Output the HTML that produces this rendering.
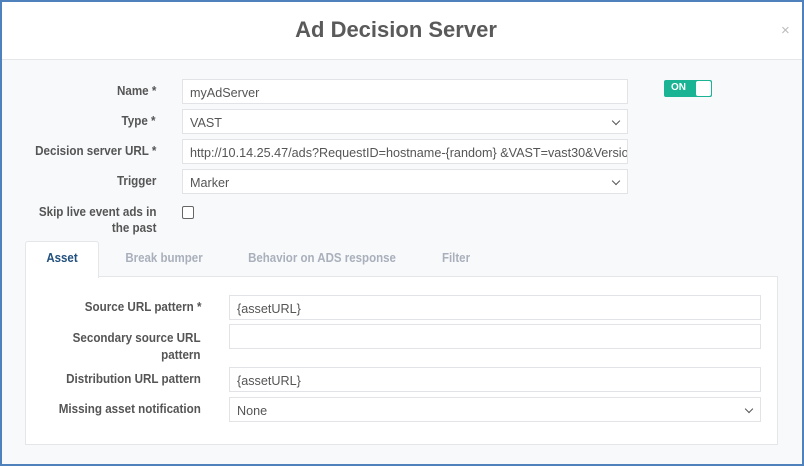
<!DOCTYPE html>
<html><head><meta charset="utf-8"><style>
*{box-sizing:border-box;margin:0;padding:0}
body{width:804px;height:466px;overflow:hidden;font-family:"Liberation Sans",sans-serif;background:#fff}
.frame{position:absolute;left:0;top:0;width:804px;height:466px;border:2px solid #4f81bd;background:#f8f9fb}
.hdr{position:absolute;left:2px;top:2px;width:800px;height:58px;background:#fff;border-bottom:1px solid #e5e6e8}
.ab{position:absolute;white-space:nowrap}
.lbl{font-weight:bold;font-size:12.5px;color:#555;text-align:right;transform:scaleX(.93);transform-origin:right center}
.inp{position:absolute;background:#fff;border:1px solid #e1e3e6;height:25px;overflow:hidden}
.inp span{position:absolute;left:7px;top:5px;font-size:13px;color:#555;white-space:nowrap;transform:scaleX(.97);transform-origin:left center}
.sel::after{content:"";position:absolute;right:8px;top:8px;width:5px;height:5px;border-right:1.5px solid #555;border-bottom:1.5px solid #555;transform:rotate(45deg)}
.tab{font-weight:bold;font-size:12.5px;color:#a9b0bb;transform:scaleX(.92);transform-origin:center center}
</style></head><body>
<div class="frame"></div>
<div class="hdr"></div>
<div class="ab" style="left:0;width:792px;top:17px;text-align:center;font-size:22px;font-weight:bold;color:#5a5a5a">Ad Decision Server</div>
<div class="ab" style="left:781px;top:22px;font-size:15px;color:#bbb">×</div>

<div class="ab lbl" style="right:648px;top:84px">Name *</div>
<div class="inp" style="left:182px;top:79px;width:446px"><span>myAdServer</span></div>
<div class="ab" style="left:664px;top:80px;width:48px;height:17px;background:#1ab394;border-radius:2px"></div>
<div class="ab" style="left:696px;top:81px;width:15px;height:15px;background:#fff;border-radius:2px"></div>
<div class="ab" style="left:671px;top:82px;font-size:10px;font-weight:bold;color:#fff">ON</div>

<div class="ab lbl" style="right:648px;top:114px">Type *</div>
<div class="inp sel" style="left:182px;top:109px;width:446px"><span>VAST</span></div>
<div class="ab lbl" style="right:648px;top:144px">Decision server URL *</div>
<div class="inp" style="left:182px;top:139px;width:446px"><span>http://10.14.25.47/ads?RequestID=hostname-{random} &amp;VAST=vast30&amp;Version</span></div>
<div class="ab lbl" style="right:648px;top:174px">Trigger</div>
<div class="inp sel" style="left:182px;top:169px;width:446px"><span>Marker</span></div>
<div class="ab lbl" style="right:648px;top:204px;line-height:16px">Skip live event ads in<br>the past</div>
<div class="ab" style="left:182px;top:206px;width:12px;height:13px;border:1px solid #666;border-radius:2px;background:#fff"></div>

<div class="ab" style="left:25px;top:276px;width:753px;height:169px;background:#fff;border:1px solid #e5e6e8"></div>
<div class="ab" style="left:25px;top:241px;width:74px;height:37px;background:#fff;border:1px solid #e5e6e8;border-bottom:none;border-radius:3px 3px 0 0"></div>
<div class="ab tab" style="left:25px;width:74px;text-align:center;top:251px;color:#22507e">Asset</div>
<div class="ab tab" style="left:104px;width:120px;text-align:center;top:251px">Break bumper</div>
<div class="ab tab" style="left:232px;width:180px;text-align:center;top:251px">Behavior on ADS response</div>
<div class="ab tab" style="left:420px;width:72px;text-align:center;top:251px">Filter</div>

<div class="ab lbl" style="right:603px;top:300px">Source URL pattern *</div>
<div class="inp" style="left:229px;top:295px;width:532px"><span>{assetURL}</span></div>
<div class="ab lbl" style="right:603px;top:330px;line-height:17px">Secondary source URL<br>pattern</div>
<div class="inp" style="left:229px;top:324px;width:532px"></div>
<div class="ab lbl" style="right:603px;top:372px">Distribution URL pattern</div>
<div class="inp" style="left:229px;top:367px;width:532px"><span>{assetURL}</span></div>
<div class="ab lbl" style="right:603px;top:402px">Missing asset notification</div>
<div class="inp sel" style="left:229px;top:397px;width:532px"><span>None</span></div>
</body></html>
